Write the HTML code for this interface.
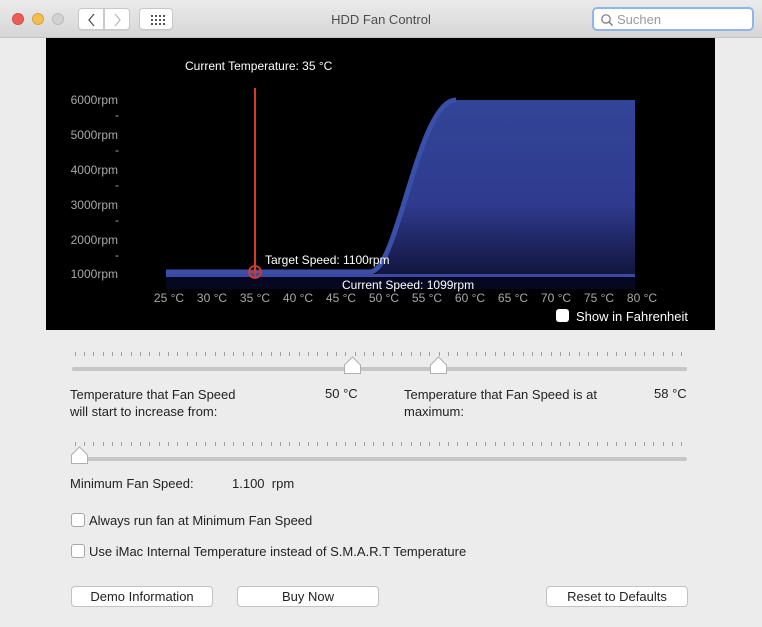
<!DOCTYPE html>
<html><head><meta charset="utf-8"><style>
*{margin:0;padding:0;box-sizing:border-box}
body{width:762px;height:627px;background:#ececec;font-family:"Liberation Sans",sans-serif;font-size:13px;color:#222;position:relative;overflow:hidden}
.abs{position:absolute}
.tb{position:absolute;left:0;top:0;width:762px;height:38px;background:linear-gradient(#ebebeb,#d6d6d6);border-bottom:1px solid #c4c4c4}
.dot{position:absolute;top:13px;width:12px;height:12px;border-radius:50%}
.btn{position:absolute;background:#fff;border:1px solid #c8c8c8;border-radius:4px;box-shadow:0 1px 0 rgba(0,0,0,.05)}
.pb{position:absolute;height:21px;background:#fff;border:1px solid #c2c2c2;border-radius:4px;text-align:center;line-height:19px;font-size:13px;color:#222}
.cb{position:absolute;width:14px;height:14px;background:#fff;border:1px solid #a8a8a8;border-radius:3px}
.track{position:absolute;height:4px;background:#c6c6c6;border-radius:2px}
.knob{position:absolute;width:18px;height:14px}
</style></head><body>
<div class="tb">
<div class="dot" style="left:12px;background:#ec5d57;border:1px solid #d24d47"></div>
<div class="dot" style="left:32px;background:#f4be4f;border:1px solid #d9a33c"></div>
<div class="dot" style="left:52px;background:#d2d2d2;border:1px solid #bcbcbc"></div>
<div class="btn" style="left:78px;top:8px;width:26px;height:22px;border-radius:4px 0 0 4px"><svg width="26" height="22"><path d="M15 5 L10 11 L15 17" stroke="#555" fill="none" stroke-width="1.3"/></svg></div>
<div class="btn" style="left:104px;top:8px;width:26px;height:22px;border-radius:0 4px 4px 0"><svg width="26" height="22"><path d="M10 5 L15 11 L10 17" stroke="#bbb" fill="none" stroke-width="1.3"/></svg></div>
<div class="btn" style="left:139px;top:8px;width:34px;height:22px"><svg width="34" height="22"><g fill="#555"><rect x="11" y="6" width="2" height="2"/><rect x="15" y="6" width="2" height="2"/><rect x="19" y="6" width="2" height="2"/><rect x="23" y="6" width="2" height="2"/><rect x="11" y="10" width="2" height="2"/><rect x="15" y="10" width="2" height="2"/><rect x="19" y="10" width="2" height="2"/><rect x="23" y="10" width="2" height="2"/><rect x="11" y="14" width="2" height="2"/><rect x="15" y="14" width="2" height="2"/><rect x="19" y="14" width="2" height="2"/><rect x="23" y="14" width="2" height="2"/></g></svg></div>
<div class="abs" style="left:0;width:762px;top:12px;text-align:center;color:#4d4d4d;font-size:13px">HDD Fan Control</div>
<div class="abs" style="left:592px;top:7px;width:162px;height:24px;background:#fff;border:2px solid #8fb6ea;border-radius:5px"><svg class="abs" style="left:6px;top:4px" width="14" height="14"><circle cx="6" cy="6" r="4.2" stroke="#777" fill="none" stroke-width="1.2"/><path d="M9 9 L12.5 12.5" stroke="#777" stroke-width="1.3"/></svg><span class="abs" style="left:23px;top:3px;color:#9a9a9a;font-size:13px">Suchen</span></div>
</div>
<svg class="abs" style="left:46px;top:38px" width="669" height="292" font-family="Liberation Sans, sans-serif">
<defs><linearGradient id="g" x1="0" y1="62" x2="0" y2="252" gradientUnits="userSpaceOnUse"><stop offset="0" stop-color="#324598"/><stop offset="0.55" stop-color="#2f3a8e"/><stop offset="1" stop-color="#0b0d2c"/></linearGradient></defs>
<rect width="669" height="292" fill="#000"/>
<path d="M120 239 L324 239 C350 239 372 62 410 62 L589 62 L589 251 L120 251 Z" fill="url(#g)"/>
<path d="M120 238 L589 238 L589 251 L120 251 Z" fill="#060822"/>
<path d="M120 234 L324 234 C352 234 372 62 410 62" stroke="#3a4fa8" stroke-width="5" fill="none"/>
<rect x="120" y="236" width="469" height="3" fill="#3a4aa5"/>
<line x1="209" y1="50" x2="209" y2="234" stroke="#d63a2a" stroke-width="2"/>
<circle cx="209" cy="234" r="6" stroke="#d63a2a" stroke-width="1.8" fill="none"/>
<path d="M203 234 H215 M209 228 V240" stroke="#d63a2a" stroke-width="1.5"/>
<g fill="#fff" font-size="12"><text x="139" y="32">Current Temperature: 35 °C</text><text x="219" y="226">Target Speed: 1100rpm</text><text x="296" y="251">Current Speed: 1099rpm</text></g>
<g fill="#a8a8a8" font-size="12" text-anchor="end"><text x="72" y="66">6000rpm</text><text x="72" y="101">5000rpm</text><text x="72" y="136">4000rpm</text><text x="72" y="171">3000rpm</text><text x="72" y="206">2000rpm</text><text x="72" y="240">1000rpm</text>
<text x="73" y="81">-</text><text x="73" y="116">-</text><text x="73" y="151">-</text><text x="73" y="186">-</text><text x="73" y="221">-</text></g>
<g fill="#a8a8a8" font-size="12" text-anchor="middle"><text x="123" y="264">25 °C</text><text x="166" y="264">30 °C</text><text x="209" y="264">35 °C</text><text x="252" y="264">40 °C</text><text x="295" y="264">45 °C</text><text x="338" y="264">50 °C</text><text x="381" y="264">55 °C</text><text x="424" y="264">60 °C</text><text x="467" y="264">65 °C</text><text x="510" y="264">70 °C</text><text x="553" y="264">75 °C</text><text x="596" y="264">80 °C</text></g>
<rect x="510" y="271" width="13" height="13" rx="3" fill="#fff"/>
<text x="530" y="283" fill="#fff" font-size="13">Show in Fahrenheit</text>
</svg>
<svg class="abs" style="left:0;top:345px" width="762" height="125">
<g stroke="#9a9a9a" stroke-width="1" id="t1"></g>
<path id="p1" stroke="#a0a0a0" d=""/>
</svg>
<div class="track" style="left:72px;top:367px;width:615px"></div>
<div class="track" style="left:72px;top:457px;width:615px"></div>
<svg class="abs" style="left:0;top:345px" width="762" height="125" stroke="#a0a0a0">
<path d="M75.5 7v4M84.5 7v4M93.5 7v4M103.5 7v4M112.5 7v4M121.5 7v4M131.5 7v4M140.5 7v4M149.5 7v4M159.5 7v4M168.5 7v4M177.5 7v4M187.5 7v4M196.5 7v4M205.5 7v4M215.5 7v4M224.5 7v4M233.5 7v4M243.5 7v4M252.5 7v4M261.5 7v4M271.5 7v4M280.5 7v4M289.5 7v4M299.5 7v4M308.5 7v4M317.5 7v4M327.5 7v4M336.5 7v4M345.5 7v4M355.5 7v4M364.5 7v4M373.5 7v4M383.5 7v4M392.5 7v4M401.5 7v4M411.5 7v4M420.5 7v4M429.5 7v4M439.5 7v4M448.5 7v4M457.5 7v4M467.5 7v4M476.5 7v4M485.5 7v4M495.5 7v4M504.5 7v4M513.5 7v4M523.5 7v4M532.5 7v4M541.5 7v4M551.5 7v4M560.5 7v4M569.5 7v4M579.5 7v4M588.5 7v4M597.5 7v4M607.5 7v4M616.5 7v4M625.5 7v4M635.5 7v4M644.5 7v4M653.5 7v4M663.5 7v4M672.5 7v4M681.5 7v4"/>
<path transform="translate(0,90)" d="M75.5 7v4M84.5 7v4M93.5 7v4M103.5 7v4M112.5 7v4M121.5 7v4M131.5 7v4M140.5 7v4M149.5 7v4M159.5 7v4M168.5 7v4M177.5 7v4M187.5 7v4M196.5 7v4M205.5 7v4M215.5 7v4M224.5 7v4M233.5 7v4M243.5 7v4M252.5 7v4M261.5 7v4M271.5 7v4M280.5 7v4M289.5 7v4M299.5 7v4M308.5 7v4M317.5 7v4M327.5 7v4M336.5 7v4M345.5 7v4M355.5 7v4M364.5 7v4M373.5 7v4M383.5 7v4M392.5 7v4M401.5 7v4M411.5 7v4M420.5 7v4M429.5 7v4M439.5 7v4M448.5 7v4M457.5 7v4M467.5 7v4M476.5 7v4M485.5 7v4M495.5 7v4M504.5 7v4M513.5 7v4M523.5 7v4M532.5 7v4M541.5 7v4M551.5 7v4M560.5 7v4M569.5 7v4M579.5 7v4M588.5 7v4M597.5 7v4M607.5 7v4M616.5 7v4M625.5 7v4M635.5 7v4M644.5 7v4M653.5 7v4M663.5 7v4M672.5 7v4M681.5 7v4"/>
<g fill="#fff" stroke="#b0b0b0" stroke-width="1">
<path d="M344.5 28.5 V20 L352.5 12 L360.5 20 V28.5 Z"/>
<path d="M430.5 28.5 V20 L438.5 12 L446.5 20 V28.5 Z"/>
<path d="M71.5 118.5 V110 L79.5 102 L87.5 110 V118.5 Z"/>
</g>
</svg>
<div class="abs" style="left:70px;top:386px;line-height:17px">Temperature that Fan Speed<br>will start to increase from:</div>
<div class="abs" style="left:325px;top:386px">50 °C</div>
<div class="abs" style="left:404px;top:386px;line-height:17px">Temperature that Fan Speed is at<br>maximum:</div>
<div class="abs" style="left:654px;top:386px">58 °C</div>
<div class="abs" style="left:70px;top:476px">Minimum Fan Speed:</div>
<div class="abs" style="left:232px;top:476px">1.100&nbsp; rpm</div>
<div class="cb" style="left:71px;top:513px"></div>
<div class="abs" style="left:89px;top:513px">Always run fan at Minimum Fan Speed</div>
<div class="cb" style="left:71px;top:544px"></div>
<div class="abs" style="left:89px;top:544px">Use iMac Internal Temperature instead of S.M.A.R.T Temperature</div>
<div class="pb" style="left:71px;top:586px;width:142px">Demo Information</div>
<div class="pb" style="left:237px;top:586px;width:142px">Buy Now</div>
<div class="pb" style="left:546px;top:586px;width:142px">Reset to Defaults</div>
</body></html>
